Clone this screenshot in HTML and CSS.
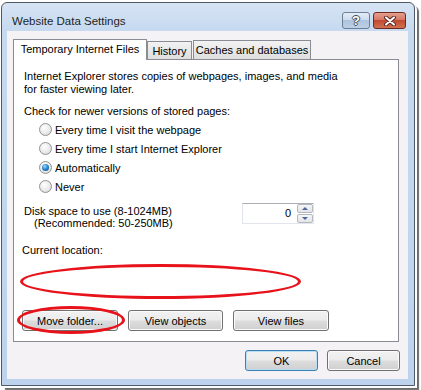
FILE: index.html
```html
<!DOCTYPE html>
<html>

<head>
  <link rel="stylesheet" href="styles.css">
</head>

<body>
  <div class="window">
    <div class="titlebar">
      <span class="title">Website Data Settings</span>
      <div class="caption-buttons">
        <span class="cap-btn help">?</span>
        <span class="cap-btn close">
          <svg width="14" height="10" viewBox="0 0 14 10">
            <path d="M3 1.5 L11 8.5 M11 1.5 L3 8.5" stroke="#5a2a24" stroke-width="4" stroke-linecap="round" />
            <path d="M3 1.5 L11 8.5 M11 1.5 L3 8.5" stroke="#ffffff" stroke-width="2" stroke-linecap="round" />
          </svg>
        </span>
      </div>
    </div>

    <div class="client">
      <div class="tabs">
        <span class="tab selected">Temporary Internet Files</span>
        <span class="tab history">History</span>
        <span class="tab caches">Caches and databases</span>
      </div>

      <div class="panel">
        <p class="intro">Internet Explorer stores copies of webpages, images, and media<br />for faster viewing later.</p>
        <p class="check">Check for newer versions of stored pages:</p>

        <ul class="radios">
          <li><span class="radio"></span>Every time I visit the webpage</li>
          <li><span class="radio"></span>Every time I start Internet Explorer</li>
          <li><span class="radio checked"></span>Automatically</li>
          <li><span class="radio"></span>Never</li>
        </ul>

        <div class="disk">
          <div class="disk-label">
            Disk space to use (8-1024MB)<br />
            <span class="indent">(Recommended: 50-250MB)</span>
          </div>
          <div class="spin">
            <span class="spin-value">0</span>
            <span class="spin-arrows">
              <span class="arrow up"></span>
              <span class="arrow down"></span>
            </span>
          </div>
        </div>

        <p class="location-label">Current location:</p>
        <div class="location"></div>

        <div class="panel-buttons">
          <span class="btn circled">Move folder...</span>
          <span class="btn">View objects</span>
          <span class="btn">View files</span>
        </div>
      </div>

      <div class="dialog-buttons">
        <span class="btn default">OK</span>
        <span class="btn">Cancel</span>
      </div>
    </div>
  </div>
</body>

</html>
```

FILE: styles.css
```css
body {
  margin: 0;
  padding: 2px 0 0 1px;
  width: 421px;
  height: 390px;
  box-sizing: border-box;
  background-color: #ffffff;
  font-family: 'Liberation Sans', Arial, sans-serif;
  font-size: 11px;
  color: #000000;
  overflow: hidden;
}

.window {
  width: 414px;
  height: 384px;
  box-sizing: border-box;
  border: 1px solid #4e5a68;
  border-radius: 6px 6px 0 0;
  background: linear-gradient(#d6e4f4 0, #c6d9ef 28px, #bdd3ed 100%);
  box-shadow: 2px 2px 0 0 #ffffff, 4px 4px 1px 0 #6a6a6a;
  display: flex;
  flex-direction: column;
}

.titlebar {
  height: 28px;
  display: flex;
  justify-content: space-between;
  padding: 0 8px 0 10px;
}

.title {
  padding-top: 11px;
  line-height: 15px;
  font-size: 11.5px;
  color: #1e1e1e;
}

.caption-buttons {
  display: flex;
  gap: 3px;
  margin-top: 9px;
  height: 17px;
}

.cap-btn {
  display: flex;
  align-items: center;
  justify-content: center;
  box-sizing: border-box;
  height: 17px;
  border-radius: 3px;
}

.help {
  width: 28px;
  border: 1px solid #6d7d92;
  background: linear-gradient(#e4edf7 0%, #c9d9ec 50%, #aec3dd 50%, #bcd0e6 100%);
  color: #ffffff;
  font-weight: bold;
  font-size: 13px;
  text-shadow: 1px 0 0 #3d4a5c, -1px 0 0 #3d4a5c, 0 1px 0 #3d4a5c, 0 -1px 0 #3d4a5c;
}

.close {
  width: 33px;
  border: 1px solid #6b2b23;
  background: linear-gradient(#e6a08f 0%, #d47460 50%, #c24a32 50%, #d0704e 100%);
}

.client {
  flex: 1;
  margin: 0 6px 6px 5px;
  background-color: #f5f2f6;
  padding: 8px 9px 7px 6px;
  display: flex;
  flex-direction: column;
}

.tabs {
  display: flex;
  align-items: flex-end;
  height: 20px;
}

.tab {
  box-sizing: border-box;
  height: 18px;
  border: 1px solid #898c95;
  border-bottom: none;
  background: linear-gradient(#f2f2f2, #dedede);
  display: flex;
  align-items: center;
  justify-content: center;
  line-height: 14px;
}

.tab.selected {
  width: 134px;
  height: 21px;
  margin-bottom: -1px;
  background: #ffffff;
  position: relative;
  z-index: 1;
  padding-bottom: 2px;
}

.history {
  width: 45px;
}

.caches {
  width: 118px;
  margin-left: 1px;
  height: 19px;
}

.panel {
  width: 386px;
  height: 283px;
  box-sizing: border-box;
  border: 1px solid #898c95;
  background: #ffffff;
  padding: 10px 10px 0 10px;
}

p {
  margin: 0;
  line-height: 13px;
}

.check {
  margin-top: 9px;
}

.radios {
  list-style: none;
  margin: 2px 0 0 0;
  padding: 0 0 0 15px;
}

.radios li {
  height: 19px;
  display: flex;
  align-items: center;
  gap: 3px;
}

.radio {
  width: 13px;
  height: 13px;
  box-sizing: border-box;
  border-radius: 50%;
  border: 1px solid #929292;
  background: radial-gradient(circle at 40% 35%, #ffffff 0%, #ececec 50%, #d2d2d2 100%);
  display: flex;
  align-items: center;
  justify-content: center;
}

.radio.checked::after {
  content: "";
  width: 7px;
  height: 7px;
  border-radius: 50%;
  background: radial-gradient(circle at 40% 35%, #9fdcff 0%, #2a8ad4 45%, #0b3f7a 100%);
}

.disk {
  display: flex;
  margin-top: 9px;
}

.disk-label {
  width: 218px;
  line-height: 12px;
}

.indent {
  padding-left: 10px;
}

.spin {
  margin-top: -2px;
  width: 72px;
  height: 21px;
  box-sizing: border-box;
  display: flex;
  border: 1px solid #e2e6ec;
  border-top-color: #abadb3;
  background: #ffffff;
}

.spin-value {
  flex: 1;
  text-align: right;
  padding-right: 6px;
  line-height: 19px;
}

.spin-arrows {
  width: 16px;
  display: flex;
  flex-direction: column;
  gap: 1px;
}

.arrow {
  flex: 1;
  box-sizing: border-box;
  border: 1px solid #b4b8c0;
  border-radius: 2px;
  background: linear-gradient(#f6f6f6, #e2e4e8);
  display: flex;
  align-items: center;
  justify-content: center;
}

.arrow::after {
  content: "";
  border-left: 3px solid transparent;
  border-right: 3px solid transparent;
}

.arrow.up::after {
  border-bottom: 3px solid #4d6599;
}

.arrow.down::after {
  border-top: 3px solid #4d6599;
}

.location-label {
  margin: 15px 0 0 -2px;
}

.location {
  margin: 7px 0 0 -4px;
  width: 281px;
  height: 35px;
  box-sizing: border-box;
  border: 3px solid #e8121a;
  border-radius: 50%;
}

.panel-buttons {
  display: flex;
  gap: 10px;
  margin: 11px 0 0 -2px;
}

.btn {
  box-sizing: border-box;
  height: 21px;
  width: 96px;
  border: 1px solid #707070;
  border-radius: 3px;
  background: linear-gradient(#f2f2f2 0%, #ebebeb 48%, #dddddd 52%, #cfcfcf 100%);
  box-shadow: inset 0 0 0 1px #fbfbfb;
  display: flex;
  align-items: center;
  justify-content: center;
  position: relative;
}

.panel-buttons .btn:nth-child(2) {
  width: 95px;
}

.circled::after {
  content: "";
  position: absolute;
  left: -6px;
  right: -8px;
  top: -5px;
  bottom: -4px;
  border: 3px solid #e8121a;
  border-radius: 50%;
}

.dialog-buttons {
  display: flex;
  justify-content: flex-end;
  gap: 9px;
  margin: 8px -1px 0 0;
}

.dialog-buttons .btn {
  width: 73px;
}

.btn.default {
  border-color: #3c7fb1;
  box-shadow: inset 0 0 0 1px #b8def6;
}
```
